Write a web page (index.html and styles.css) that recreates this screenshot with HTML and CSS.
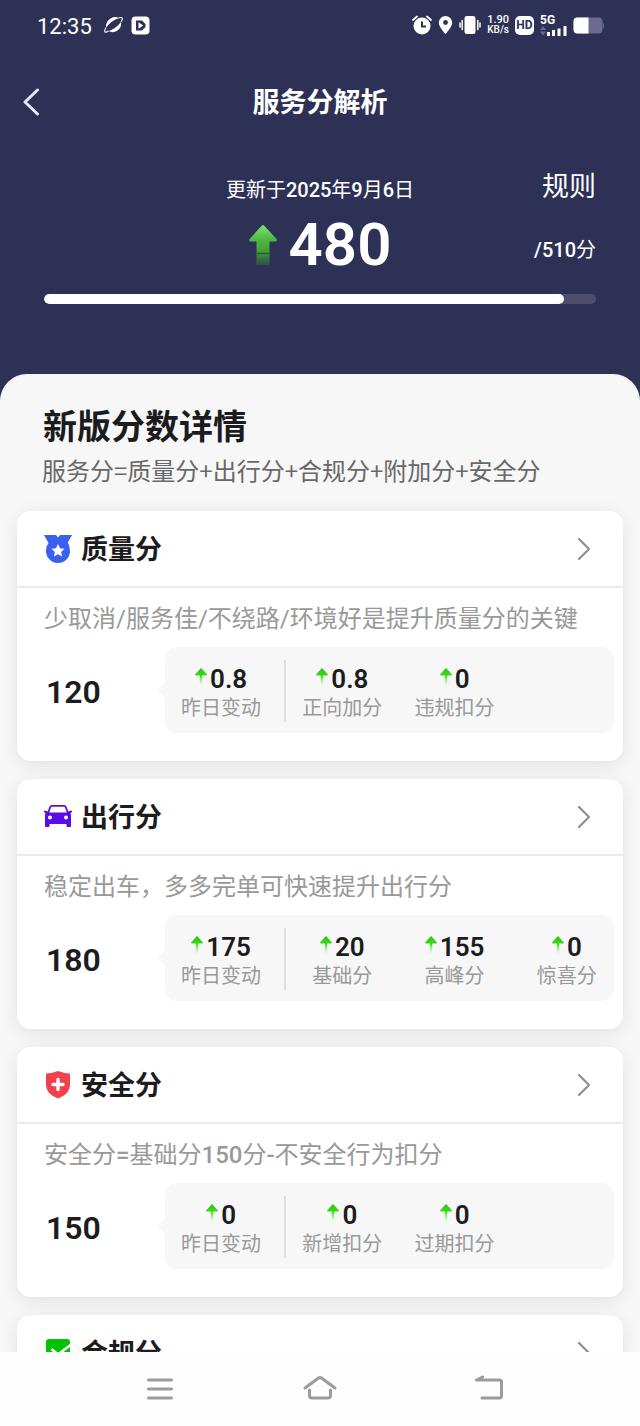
FILE: index.html
```html
<!DOCTYPE html>
<html lang="zh-CN">
<head>
<meta charset="utf-8">
<meta name="viewport" content="width=device-width, initial-scale=1">
<title>服务分解析</title>
<link rel="stylesheet" href="styles.css">
</head>
<body>
<svg class="defs" width="0" height="0" aria-hidden="true">
  <defs>
    <linearGradient id="rise" x1="0" y1="0" x2="0" y2="1">
      <stop offset="0" stop-color="#2bbf0c"/><stop offset=".45" stop-color="#3fdc20"/><stop offset="1" stop-color="#8df07a" stop-opacity="0"/>
    </linearGradient>
    <linearGradient id="bigrise" x1="0" y1="0" x2="0" y2="1">
      <stop offset="0" stop-color="#7be667"/><stop offset=".35" stop-color="#52b844"/><stop offset=".72" stop-color="#3c9a37"/><stop offset="1" stop-color="#34603f" stop-opacity=".6"/>
    </linearGradient>
    <symbol id="up" viewBox="0 0 12 18"><path d="M6 0L12 6.500Q12 7.500 11 7.500H7.200V18H4.800V7.500H1Q0 7.500 0 6.500Z" fill="url(#rise)"/></symbol>
    <symbol id="chevron" viewBox="0 0 14 24"><path d="M2 2L12 12L2 22" fill="none" stroke="#8f8f8f" stroke-width="2.200" stroke-linecap="round" stroke-linejoin="round"/></symbol>
  </defs>
</svg>

<header class="top">
  <div class="status">
    <div class="status-side">
      <time class="clock">12:35</time>
      <svg width="19" height="18" viewBox="0 0 19 18"><path d="M2 11.500Q1.500 5.500 6.500 2.500Q11 0 15 2Q7.500 4.500 2 11.500Z" fill="#fff"/><path d="M4.500 15Q12 12.500 17 6Q18 11 13.500 14.500Q9 17.500 4.500 15Z" fill="#fff"/><path d="M14.500 2Q18 .8 18.300 2.300Q18.500 4 17 6M2 11.500Q0 15 1 16Q2 16.600 4.500 15" fill="none" stroke="#fff" stroke-width="1.100"/></svg>
      <svg width="19" height="19" viewBox="0 0 19 19"><rect x=".5" y=".5" width="18" height="18" rx="4" fill="#fff"/><path d="M5 4.500H11L14.500 8V11L11 14.500H5Z" fill="#2e3156"/><path d="M7.500 6.300L12.200 9.500L7.500 12.700Z" fill="#fff"/></svg>
    </div>
    <div class="status-side status-right">
      <svg width="20" height="20" viewBox="0 0 20 20"><circle cx="10" cy="11" r="8.500" fill="#fff"/><path d="M1 5L5 1.500M19 5L15 1.500" stroke="#fff" stroke-width="1.800" stroke-linecap="round"/><path d="M10 6.500V11.500H14" fill="none" stroke="#2e3156" stroke-width="2"/></svg>
      <svg width="15" height="20" viewBox="0 0 15 20"><path d="M7.500 1A6.700 6.700 0 0 0 .8 7.700C.8 12 7.500 19 7.500 19S14.200 12 14.200 7.700A6.700 6.700 0 0 0 7.500 1Z" fill="#fff"/><circle cx="7.500" cy="7.500" r="2.400" fill="#2e3156"/></svg>
      <svg width="22" height="20" viewBox="0 0 22 20"><rect x="5.500" y="1" width="11" height="18" rx="2.500" fill="#fff"/><path d="M3.200 5.500V14.500M18.800 5.500V14.500M1 8V12M21 8V12" stroke="#fff" stroke-width="1.500" stroke-linecap="round"/></svg>
      <div class="speed"><span class="rate">1.90</span><span>KB/s</span></div>
      <div class="hd">HD</div>
      <div class="cell">
        <span>5G</span>
        <svg width="27" height="11" viewBox="0 0 27 11"><path d="M0 5L3 1L6 5ZM0 6.500L3 10.500L6 6.500Z" fill="#686a88"/><path d="M7 7H10V11H7ZM12 5H15V11H12ZM17.500 3.500H20.500V11H17.500ZM23.500 1H26.500V11H23.500Z" fill="#fff"/></svg>
      </div>
      <svg width="32" height="17" viewBox="0 0 32 17"><rect x=".5" y=".5" width="29" height="16" rx="4" fill="#6b6c8d"/><path d="M30 5Q32 8.500 30 12Z" fill="#6b6c8d"/><path d="M15.500 .5V16.500H4.500A4 4 0 0 1 .5 12.500V4.500A4 4 0 0 1 4.500 .5Z" fill="#fff"/></svg>
    </div>
  </div>

  <div class="titlebar">
    <button class="back" type="button" aria-label="返回"><svg width="18" height="28" viewBox="0 0 18 28"><path d="M15.500 2L3 14L15.500 26" fill="none" stroke="#e6e7f8" stroke-width="3" stroke-linecap="round" stroke-linejoin="round"/></svg></button>
    <h1>服务分解析</h1>
  </div>

  <section class="hero">
    <div class="hero-row">
      <p class="updated">更新于<b>2025</b>年<b>9</b>月<b>6</b>日</p>
      <a class="rules" href="#rules">规则</a>
    </div>
    <div class="hero-row">
      <div class="score">
        <svg width="28" height="40" viewBox="0 0 28 40"><path d="M14 0Q15 0 16 1.500L27.500 14Q28.500 16 26.500 16.500H20.500V40H7.500V16.500H1.500Q-.5 16 .5 14L12 1.500Q13 0 14 0Z" fill="url(#bigrise)"/><path d="M7.500 28.500H20.500" stroke="#285a38" stroke-width="1.500"/></svg>
        <strong>480</strong>
      </div>
      <span class="max"><b>/510</b>分</span>
    </div>
    <progress class="bar" value="480" max="510" aria-label="服务分"></progress>
  </section>
</header>

<main class="sheet">
  <h2>新版分数详情</h2>
  <p class="formula">服务分=质量分+出行分+合规分+附加分+安全分</p>

  <section class="card">
    <a class="card-head" href="#quality">
      <svg width="28" height="28" viewBox="0 0 28 28"><path d="M0 0H12L14 2.500L16 0H28L23.800 7.500Q26 11 26 16A12 12 0 0 1 2 16Q2 11 4.500 8Z" fill="#3a60ee"/><path d="M14 9L16 13.300L20.500 13.800L17.200 17L18.100 21.500L14 19.300L9.900 21.500L10.800 17L7.500 13.800L12 13.300Z" fill="#fff"/></svg>
      <h3>质量分</h3>
      <svg class="chev"><use href="#chevron"/></svg>
    </a>
    <p class="desc">少取消/服务佳/不绕路/环境好是提升质量分的关键</p>
    <div class="card-body">
      <strong class="points">120</strong>
      <dl class="stats">
        <div class="stat"><dt>昨日变动</dt><dd><svg class="up"><use href="#up"/></svg>0.8</dd></div>
        <div class="stat"><dt>正向加分</dt><dd><svg class="up"><use href="#up"/></svg>0.8</dd></div>
        <div class="stat"><dt>违规扣分</dt><dd><svg class="up"><use href="#up"/></svg>0</dd></div>
      </dl>
    </div>
  </section>

  <section class="card">
    <a class="card-head" href="#travel">
      <svg width="28" height="28" viewBox="0 0 28 28"><path fill-rule="evenodd" d="M8 2H20Q22 2 22.700 4L24.300 8.500L27 7.500Q28 7.500 28 8.500Q28 9.500 26.500 10Q27 11 27 12.500V23Q27 24 26 24H23.500Q22.500 24 22.500 23V21H5.500V23Q5.500 24 4.500 24H2Q1 24 1 23V12.500Q1 11 1.500 10Q0 9.500 0 8.500Q0 7.500 1 7.500L3.700 8.500L5.300 4Q6 2 8 2ZM8 3.800Q7.200 3.800 6.900 4.700L5.200 9.500H22.800L21.100 4.700Q20.800 3.800 20 3.800Z" fill="#5a0be8"/><circle cx="6" cy="14.500" r="2" fill="#fff"/><circle cx="22" cy="14.500" r="2" fill="#fff"/></svg>
      <h3>出行分</h3>
      <svg class="chev"><use href="#chevron"/></svg>
    </a>
    <p class="desc">稳定出车，多多完单可快速提升出行分</p>
    <div class="card-body">
      <strong class="points">180</strong>
      <dl class="stats">
        <div class="stat"><dt>昨日变动</dt><dd><svg class="up"><use href="#up"/></svg>175</dd></div>
        <div class="stat"><dt>基础分</dt><dd><svg class="up"><use href="#up"/></svg>20</dd></div>
        <div class="stat"><dt>高峰分</dt><dd><svg class="up"><use href="#up"/></svg>155</dd></div>
        <div class="stat"><dt>惊喜分</dt><dd><svg class="up"><use href="#up"/></svg>0</dd></div>
      </dl>
    </div>
  </section>

  <section class="card">
    <a class="card-head" href="#safety">
      <svg width="28" height="28" viewBox="0 0 28 28"><path d="M14 0Q20 2.200 25 2.400Q26 2.500 26 3.500V14Q26 23 14 27.500Q2 23 2 14V3.500Q2 2.500 3 2.400Q8 2.200 14 0Z" fill="#f1414c"/><path d="M14 8.500V18.500M9 13.500H19" stroke="#fff" stroke-width="3.400" stroke-linecap="round"/></svg>
      <h3>安全分</h3>
      <svg class="chev"><use href="#chevron"/></svg>
    </a>
    <p class="desc">安全分<b>=</b>基础分<b>150</b>分<b>-</b>不安全行为扣分</p>
    <div class="card-body">
      <strong class="points">150</strong>
      <dl class="stats">
        <div class="stat"><dt>昨日变动</dt><dd><svg class="up"><use href="#up"/></svg>0</dd></div>
        <div class="stat"><dt>新增扣分</dt><dd><svg class="up"><use href="#up"/></svg>0</dd></div>
        <div class="stat"><dt>过期扣分</dt><dd><svg class="up"><use href="#up"/></svg>0</dd></div>
      </dl>
    </div>
  </section>

  <section class="card">
    <a class="card-head" href="#compliance">
      <svg width="28" height="28" viewBox="0 0 28 28"><rect x="2" y="0" width="24" height="27" rx="3" fill="#04c204"/><path d="M7.500 10L14 15.500L26.500 6" fill="none" stroke="#fff" stroke-width="2.600"/></svg>
      <h3>合规分</h3>
      <svg class="chev"><use href="#chevron"/></svg>
    </a>
  </section>
</main>

<nav class="sysnav" aria-label="系统导航">
  <button type="button" aria-label="菜单"><svg width="48" height="32" viewBox="0 0 48 32"><path d="M12.500 7H35.500M12.500 16H35.500M12.500 25H35.500"/></svg></button>
  <button type="button" aria-label="主页"><svg width="48" height="32" viewBox="0 0 48 32"><path d="M9 15L22.500 5Q24 4 25.500 5L39 15M13.500 17V22.500Q13.500 25 16 25H32Q34.500 25 34.500 22.500V17"/></svg></button>
  <button type="button" aria-label="后退"><svg width="48" height="32" viewBox="0 0 48 32"><path d="M26.500 4L20.500 7H43.500Q45.500 7 45.500 9V23Q45.500 25 43.500 25H26"/></svg></button>
</nav>
</body>
</html>
```

FILE: styles.css
```css
* { box-sizing: border-box; }

:root {
  --navy: #2e3156;
  --ink: #1c1c1e;
  --cjk: "Noto Sans CJK SC", sans-serif;
}

body {
  margin: 0;
  height: 100vh;
  display: flex;
  flex-direction: column;
  overflow: hidden;
  background: var(--navy);
  font-family: Roboto, var(--cjk);
  color: var(--ink);
}

h1, h2, h3, p, dl, dd, dt { margin: 0; }
a { color: inherit; text-decoration: none; }
button { border: 0; padding: 0; background: none; font: inherit; }
svg { display: block; flex: none; }
.defs { position: absolute; }

.top { flex: none; color: #fff; }

.status {
  display: flex;
  justify-content: space-between;
  align-items: center;
  height: 50px;
  padding: 0 35px 0 37px;
}
.status-side { display: flex; align-items: center; gap: 8px; }
.status-side .clock { font-size: 22px; line-height: 24px; margin-right: 4px; padding-top: 3px; }
.status-right { gap: 6px; }
.speed {
  display: flex;
  flex-direction: column;
  align-items: center;
  font-size: 10px;
  line-height: 10px;
  font-weight: 500;
}
.speed .rate { font-size: 11px; }
.hd {
  width: 19px;
  border-radius: 5px;
  background: #fff;
  color: var(--navy);
  font-size: 12px;
  line-height: 19px;
  font-weight: 700;
  text-align: center;
}
.cell { font-size: 12px; line-height: 10px; font-weight: 700; }

.titlebar {
  display: grid;
  grid-template-columns: 60px 1fr 60px;
  align-items: center;
  height: 104px;
}
.back { justify-self: start; margin-left: 22px; }
.titlebar h1 { padding-top: 2px; font-size: 27px; line-height: 40px; font-weight: 700; text-align: center; }

.hero { padding: 18px 44px 0; height: 220px; }
.hero-row {
  display: grid;
  grid-template-columns: 1fr auto 1fr;
  align-items: center;
}
.hero-row > :first-child { grid-column: 2; }
.hero-row > :last-child { justify-self: end; }
.hero b { font-weight: 500; }
.updated { font-size: 20px; line-height: 36px; }
.rules { font-size: 27px; line-height: 28px; padding-bottom: 6px; }
.score { display: flex; align-items: center; gap: 12px; height: 74px; }
.score strong { font-size: 60px; line-height: 74px; font-weight: 600; }
.max { font-size: 20px; line-height: 28px; padding-top: 10px; }

.bar {
  display: block;
  appearance: none;
  width: 100%;
  height: 10px;
  margin-top: 12px;
  border: 0;
  border-radius: 5px;
  background: #4c4e6c;
  overflow: hidden;
}
.bar::-webkit-progress-bar { background: #4c4e6c; border-radius: 5px; }
.bar::-webkit-progress-value { background: #fff; border-radius: 5px; }

.sheet {
  flex: 1;
  min-height: 0;
  overflow: hidden;
  padding: 30px 17px 0;
  border-radius: 27px 27px 0 0;
  background: #f7f7f7;
}
.sheet h2 { padding-left: 26px; font-size: 34px; line-height: 46px; font-weight: 700; }
.formula {
  padding-left: 25px;
  margin-bottom: 21px;
  font-family: var(--cjk);
  font-size: 24px;
  line-height: 40px;
  color: #686868;
  white-space: nowrap;
}

.card {
  margin-bottom: 18px;
  border-radius: 14px;
  background: #fff;
  box-shadow: 0 4px 18px rgba(0, 0, 0, .09);
}
.card-head {
  display: flex;
  align-items: center;
  height: 77px;
  padding: 0 32px 0 27px;
  border-bottom: 2px solid #ebebeb;
}
.card-head h3 { flex: 1; margin-left: 9px; padding-top: 3px; font-size: 27px; line-height: 40px; font-weight: 700; }
.chev { width: 14px; height: 24px; }
.desc {
  padding: 12px 0 0 27px;
  font-size: 24px;
  line-height: 38px;
  color: #999;
  white-space: nowrap;
}
.desc b { font-weight: 500; }
.card-body {
  display: grid;
  grid-template-columns: 148px 1fr;
  align-items: center;
  padding: 9px 9px 28px 0;
}
.points { padding: 4px 0 0 29px; font-size: 32px; line-height: 40px; font-weight: 600; }
.stats {
  position: relative;
  display: grid;
  grid-template-columns: 27% repeat(3, 25%);
  padding: 13px 0 11px;
  border-radius: 12px;
  background: #f7f7f7;
}
.stats::before {
  content: "";
  position: absolute;
  left: -5px;
  top: 50%;
  width: 12px;
  height: 12px;
  margin-top: -6px;
  background: #f7f7f7;
  transform: rotate(45deg);
}
.stat {
  display: flex;
  flex-direction: column-reverse;
  justify-content: flex-start;
  text-align: center;
  white-space: nowrap;
}
.stat:first-child { padding-right: 7px; border-right: 2px solid #dedede; }
.stat dd {
  display: flex;
  justify-content: center;
  align-items: center;
  gap: 3px;
  padding-top: 3px;
  font-size: 26px;
  line-height: 32px;
  font-weight: 600;
}
.stat dt { font-size: 20px; line-height: 27px; color: #999; }
.up { width: 12px; height: 18px; margin-bottom: 4px; }

.sysnav {
  flex: none;
  display: grid;
  grid-template-columns: repeat(3, 1fr);
  justify-items: center;
  align-items: center;
  height: 74px;
  padding: 0 80px;
  background: #fdfdfd;
}
.sysnav path {
  fill: none;
  stroke: #9c9c9c;
  stroke-width: 3;
  stroke-linecap: round;
  stroke-linejoin: round;
}
```
